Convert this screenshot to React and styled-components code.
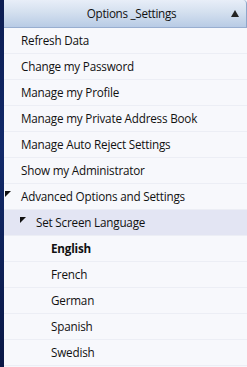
import React, { useState } from 'react';
import styled, { createGlobalStyle } from 'styled-components';

const GlobalStyle = createGlobalStyle`
    html, body {
        margin: 0;
        padding: 0;
        background: #f6f7fb;
    }
    body {
        font-family: "Open Sans", "Noto Sans", sans-serif;
        font-size: 11.7px;
        color: #111;
    }
`;

const Shell = styled.div`
    display: flex;
    width: 247px;
    height: 367px;
    overflow: hidden;
`;

const Edge = styled.div`
    width: 4px;
    flex: none;
    background: linear-gradient(180deg, #0c1d52 0%, #122a6a 40%, #0a1846 100%);
`;

const Panel = styled.div`
    flex: 1;
    display: flex;
    flex-direction: column;
    background: #f6f7fb;
`;

const Header = styled.div`
    height: 28px;
    flex: none;
    box-sizing: border-box;
    padding-bottom: 1px;
    display: flex;
    align-items: center;
    border-bottom: 1px solid #98aed0;
    border-right: 1px solid #8ea6ca;
    border-radius: 0 4px 0 0;
    background: linear-gradient(180deg, #e8eef8 0%, #d4e0ef 45%, #b8cbe5 100%);
    span {
        flex: 1;
        text-align: center;
        padding-left: 28px;
        letter-spacing: -0.3px;
    }
`;

const Arrow = styled.div`
    width: 0;
    height: 0;
    margin-right: 7px;
    border-left: 4px solid transparent;
    border-right: 4px solid transparent;
    border-bottom: 7px solid #222;
`;

const Row = styled.div`
    height: 26px;
    flex: none;
    box-sizing: border-box;
    display: flex;
    align-items: center;
    padding-left: ${props => props.indent}px;
    padding-bottom: 2px;
    border-bottom: 1px solid #eceef5;
    background: ${props => props.active ? '#e3e5f3' : '#f7f8fc'};
    font-weight: ${props => props.bold ? 700 : 400};
    cursor: default;
    white-space: nowrap;
    letter-spacing: -0.2px;
`;

const Toggle = styled.svg`
    width: 6px;
    height: 6px;
    margin-right: 10px;
    margin-top: -3px;
    flex: none;
`;

const Expanded = () => (
    <Toggle viewBox="0 0 6 6">
        <polygon points="0,0 6,0 0,6" fill="#111" />
    </Toggle>
);

const menu = [
    'Refresh Data',
    'Change my Password',
    'Manage my Profile',
    'Manage my Private Address Book',
    'Manage Auto Reject Settings',
    'Show my Administrator',
];

const languages = ['English', 'French', 'German', 'Spanish', 'Swedish'];

export default function App() {
    const [language, setLanguage] = useState('English');
    return (
        <>
            <GlobalStyle />
            <Shell>
                <Edge />
                <Panel>
                    <Header>
                        <span>Options _Settings</span>
                        <Arrow />
                    </Header>
                    {menu.map(item => (
                        <Row key={item} indent={17}>{item}</Row>
                    ))}
                    <Row indent={1}>
                        <Expanded />
                        Advanced Options and Settings
                    </Row>
                    <Row indent={16} active>
                        <Expanded />
                        Set Screen Language
                    </Row>
                    {languages.map(lang => (
                        <Row key={lang} indent={47} bold={lang === language} onClick={() => setLanguage(lang)}>
                            {lang}
                        </Row>
                    ))}
                </Panel>
            </Shell>
        </>
    );
}
